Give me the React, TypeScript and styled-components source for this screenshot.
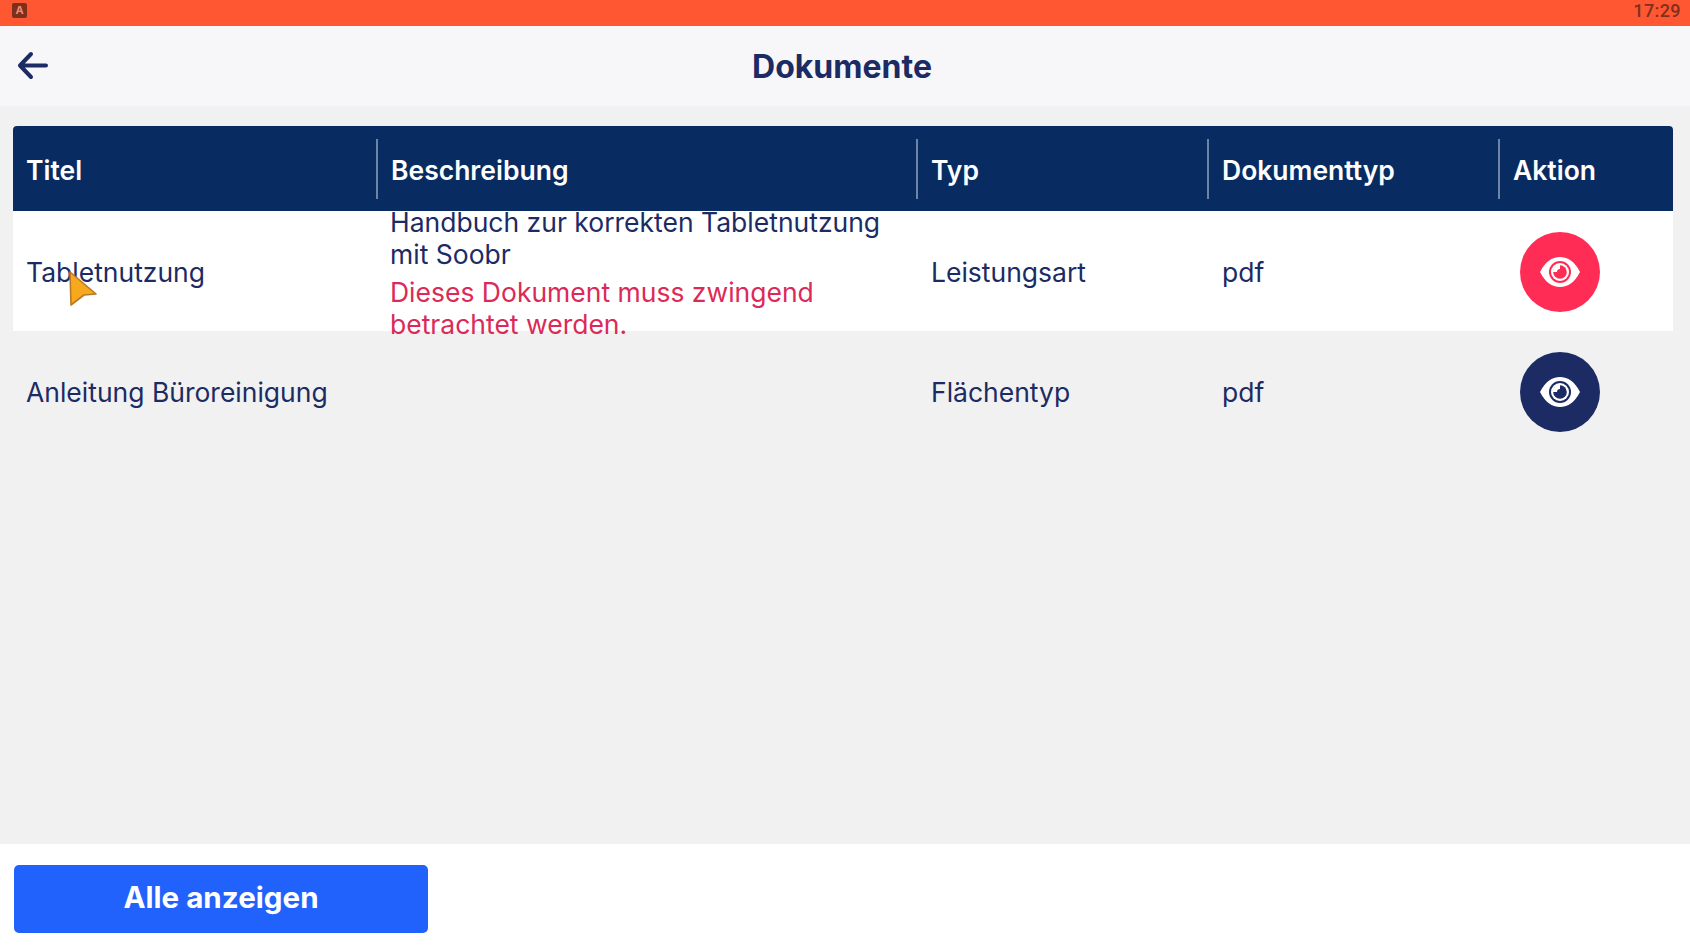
import React from "react";
import styled, { createGlobalStyle } from "styled-components";

const Global = createGlobalStyle`
  html, body { margin: 0; padding: 0; height: 100%; background: #f1f1f1; }
  #root { height: 100%; }
  * { box-sizing: border-box; }
`;

const Page = styled.div`
  width: 1690px;
  height: 946px;
  display: flex;
  flex-direction: column;
  position: relative;
  overflow: hidden;
  background: #f1f1f1;
  font-family: Inter, "Liberation Sans", sans-serif;
  color: #1c2b63;
`;

const StatusBar = styled.div`
  height: 26px;
  flex: none;
  background: #ff5731;
  display: flex;
  align-items: flex-start;
  justify-content: space-between;
  padding: 3px 9px 0 12px;
`;

const StatusBadge = styled.div`
  width: 15px;
  height: 15px;
  border-radius: 2px;
  background: #7c2f1d;
  color: #f08a6c;
  font-size: 11px;
  font-weight: 700;
  line-height: 15px;
  text-align: center;
`;

const Clock = styled.div`
  font-family: Roboto, sans-serif;
  font-size: 18px;
  font-weight: 500;
  line-height: 15px;
  color: #7e3020;
  letter-spacing: 0.4px;
`;

const Header = styled.header`
  height: 80px;
  flex: none;
  background: #f7f7fa;
  display: flex;
  align-items: center;
  justify-content: center;
  position: relative;
`;

const BackButton = styled.div`
  position: absolute;
  left: 17px;
  top: 24px;
  width: 32px;
  height: 32px;
  color: #1c2b63;
`;

const Title = styled.h1`
  margin: 0 0 0 -6px;
  font-size: 32px;
  font-weight: 700;
  color: #1c2b63;
`;

const Content = styled.main`
  flex: 1;
  padding: 20px 17px 0 13px;
`;

const columns = "363px 540px 291px 291px 175px";

const TableHead = styled.div`
  position: relative;
  z-index: 1;
  height: 85px;
  display: grid;
  grid-template-columns: ${columns};
  align-items: center;
  background: #082c62;
  border-radius: 4px 4px 0 0;
`;

const HeadCell = styled.div<{ $first?: boolean }>`
  height: 60px;
  display: flex;
  align-items: center;
  padding-top: 3px;
  padding-left: 13px;
  border-left: ${(p) => (p.$first ? "none" : "2px solid #6e84a6")};
  color: #fff;
  font-size: 26.5px;
  font-weight: 600;
`;

const Row = styled.div<{ $highlight?: boolean }>`
  height: 120px;
  display: grid;
  grid-template-columns: ${columns};
  grid-auto-rows: 120px;
  align-items: center;
  background: ${(p) => (p.$highlight ? "#fff" : "transparent")};
`;

const Cell = styled.div<{ $first?: boolean }>`
  padding-top: 2px;
  padding-left: ${(p) => (p.$first ? "13px" : "15px")};
  font-size: 26.5px;
  line-height: 32px;
  color: #1c2b63;
`;

const Description = styled(Cell)`
  padding-top: 4px;
  padding-left: 14px;
  padding-right: 30px;
`;

const Warning = styled.div`
  margin-top: 6px;
  color: #dc2a58;
`;

const ActionCell = styled.div`
  padding-top: 1px;
  padding-left: 22px;
`;

const RoundButton = styled.button<{ $alert?: boolean }>`
  width: 80px;
  height: 80px;
  padding: 0;
  border: none;
  border-radius: 50%;
  background: ${(p) => (p.$alert ? "#ff2d55" : "#1c2b63")};
  display: flex;
  align-items: center;
  justify-content: center;
`;

const Footer = styled.footer`
  height: 102px;
  flex: none;
  background: #fff;
  padding: 21px 14px 0;
`;

const PrimaryButton = styled.button`
  width: 414px;
  height: 68px;
  border: none;
  border-radius: 5px;
  background: #2062fb;
  color: #fff;
  font-family: inherit;
  font-size: 29.6px;
  font-weight: 700;
  padding: 0 0 4px;
`;

const Pointer = styled.svg`
  position: absolute;
  left: 68px;
  top: 270px;
`;

const Eye = ({ color }: { color: string }) => (
  <svg width="42" height="32" viewBox="0 0 42 32">
    <path d="M1 16C6 6 13 1 21 1s15 5 20 15c-5 10-12 15-20 15S6 26 1 16Z" fill="#fff" />
    <circle cx="21" cy="16" r="11" fill={color} />
    <circle cx="21" cy="16" r="9" fill="#fff" />
    <circle cx="21" cy="16" r="6.8" fill={color} />
    <path d="M21 8.8A7.2 7.2 0 0 0 13.8 16h4.2a3 3 0 0 1 3-3Z" fill="#fff" />
  </svg>
);

export default function App() {
  return (
    <Page>
      <Global />
      <StatusBar>
        <StatusBadge>A</StatusBadge>
        <Clock>17:29</Clock>
      </StatusBar>
      <Header>
        <BackButton>
          <svg width="32" height="32" viewBox="0 0 32 32" fill="none" stroke="currentColor" strokeWidth="4" strokeLinecap="round" strokeLinejoin="round">
            <path d="M29 15.5H4M14 4 3 15.5 14 27" />
          </svg>
        </BackButton>
        <Title>Dokumente</Title>
      </Header>
      <Content>
        <TableHead>
          <HeadCell $first>Titel</HeadCell>
          <HeadCell>Beschreibung</HeadCell>
          <HeadCell>Typ</HeadCell>
          <HeadCell>Dokumenttyp</HeadCell>
          <HeadCell>Aktion</HeadCell>
        </TableHead>
        <Row $highlight>
          <Cell $first>Tabletnutzung</Cell>
          <Description>
            Handbuch zur korrekten Tabletnutzung mit Soobr
            <Warning>Dieses Dokument muss zwingend betrachtet werden.</Warning>
          </Description>
          <Cell>Leistungsart</Cell>
          <Cell>pdf</Cell>
          <ActionCell>
            <RoundButton $alert aria-label="Ansehen">
              <Eye color="#ff2d55" />
            </RoundButton>
          </ActionCell>
        </Row>
        <Row>
          <Cell $first>Anleitung Büroreinigung</Cell>
          <Cell />
          <Cell>Flächentyp</Cell>
          <Cell>pdf</Cell>
          <ActionCell>
            <RoundButton aria-label="Ansehen">
              <Eye color="#1c2b63" />
            </RoundButton>
          </ActionCell>
        </Row>
      </Content>
      <Footer>
        <PrimaryButton>Alle anzeigen</PrimaryButton>
      </Footer>
      <Pointer width="30" height="36" viewBox="0 0 30 36">
        <path d="M2 2 28 24 16 25 3 35Z" fill="#f8a81d" stroke="#b8792a" strokeWidth="1.6" strokeLinejoin="round" />
      </Pointer>
    </Page>
  );
}
